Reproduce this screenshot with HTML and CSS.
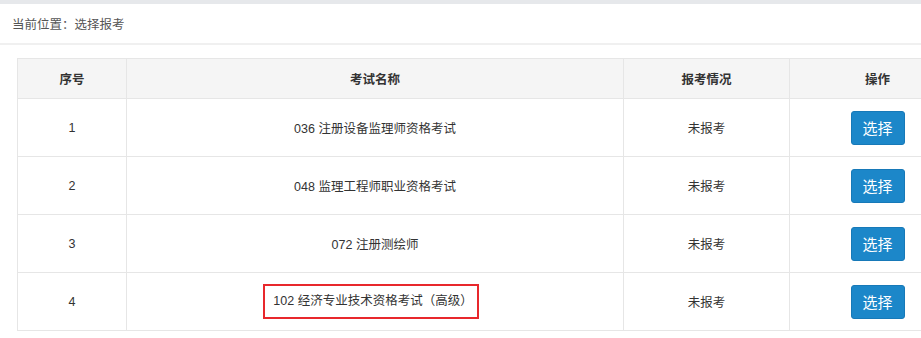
FILE: index.html
```html
<!DOCTYPE html>
<html lang="zh-CN">
<head>
<meta charset="utf-8">
<title>选择报考</title>
<link rel="stylesheet" href="styles.css">
</head>
<body>
<div class="topbar"></div>
<div class="crumb">当前位置：选择报考</div>
<div class="content">
  <table class="exam-table">
    <colgroup>
      <col class="c1"><col class="c2"><col class="c3"><col class="c4">
    </colgroup>
    <thead>
      <tr><th>序号</th><th>考试名称</th><th>报考情况</th><th>操作</th></tr>
    </thead>
    <tbody>
      <tr><td>1</td><td>036 注册设备监理师资格考试</td><td>未报考</td><td><button class="btn">选择</button></td></tr>
      <tr><td>2</td><td>048 监理工程师职业资格考试</td><td>未报考</td><td><button class="btn">选择</button></td></tr>
      <tr><td>3</td><td>072 注册测绘师</td><td>未报考</td><td><button class="btn">选择</button></td></tr>
      <tr><td>4</td><td><span class="mark">102 经济专业技术资格考试（高级）</span></td><td>未报考</td><td><button class="btn">选择</button></td></tr>
    </tbody>
  </table>
</div>
</body>
</html>
```

FILE: styles.css
```css
html, body {
  margin: 0;
  padding: 0;
  background: #ffffff;
  overflow: hidden;
}
body {
  font-family: "Liberation Sans", "Noto Sans CJK SC", sans-serif;
  font-size: 12.5px;
  color: #333333;
  width: 921px;
}
.topbar {
  height: 4px;
  background: #e6e8eb;
}
.crumb {
  height: 39px;
  display: flex;
  align-items: center;
  padding-left: 12px;
  color: #555555;
  border-bottom: 2px solid #f0f0f0;
}
.content {
  padding: 13px 0 0 17px;
}
.exam-table {
  border-collapse: collapse;
  table-layout: fixed;
  width: 948px;
}
.c1 { width: 109px; }
.c2 { width: 497px; }
.c3 { width: 166px; }
.c4 { width: 176px; }
.exam-table th,
.exam-table td {
  border: 1px solid #e6e6e6;
  text-align: center;
  vertical-align: middle;
  padding: 0;
}
.exam-table th {
  height: 39px;
  background: #f5f5f5;
  font-weight: bold;
  color: #333333;
}
.exam-table td {
  height: 57px;
  color: #333333;
}
.btn {
  width: 54px;
  height: 34px;
  padding: 0;
  border: 1px solid #1779b8;
  border-radius: 3px;
  background: #1c87c9;
  color: #ffffff;
  font-family: "Liberation Sans", "Noto Sans CJK SC", sans-serif;
  font-size: 15px;
  cursor: pointer;
}
.mark {
  display: inline-block;
  border: 2px solid #e8282c;
  padding: 7px 4px 7px 8px;
  line-height: 17px;
  margin-right: 8px;
}
```
